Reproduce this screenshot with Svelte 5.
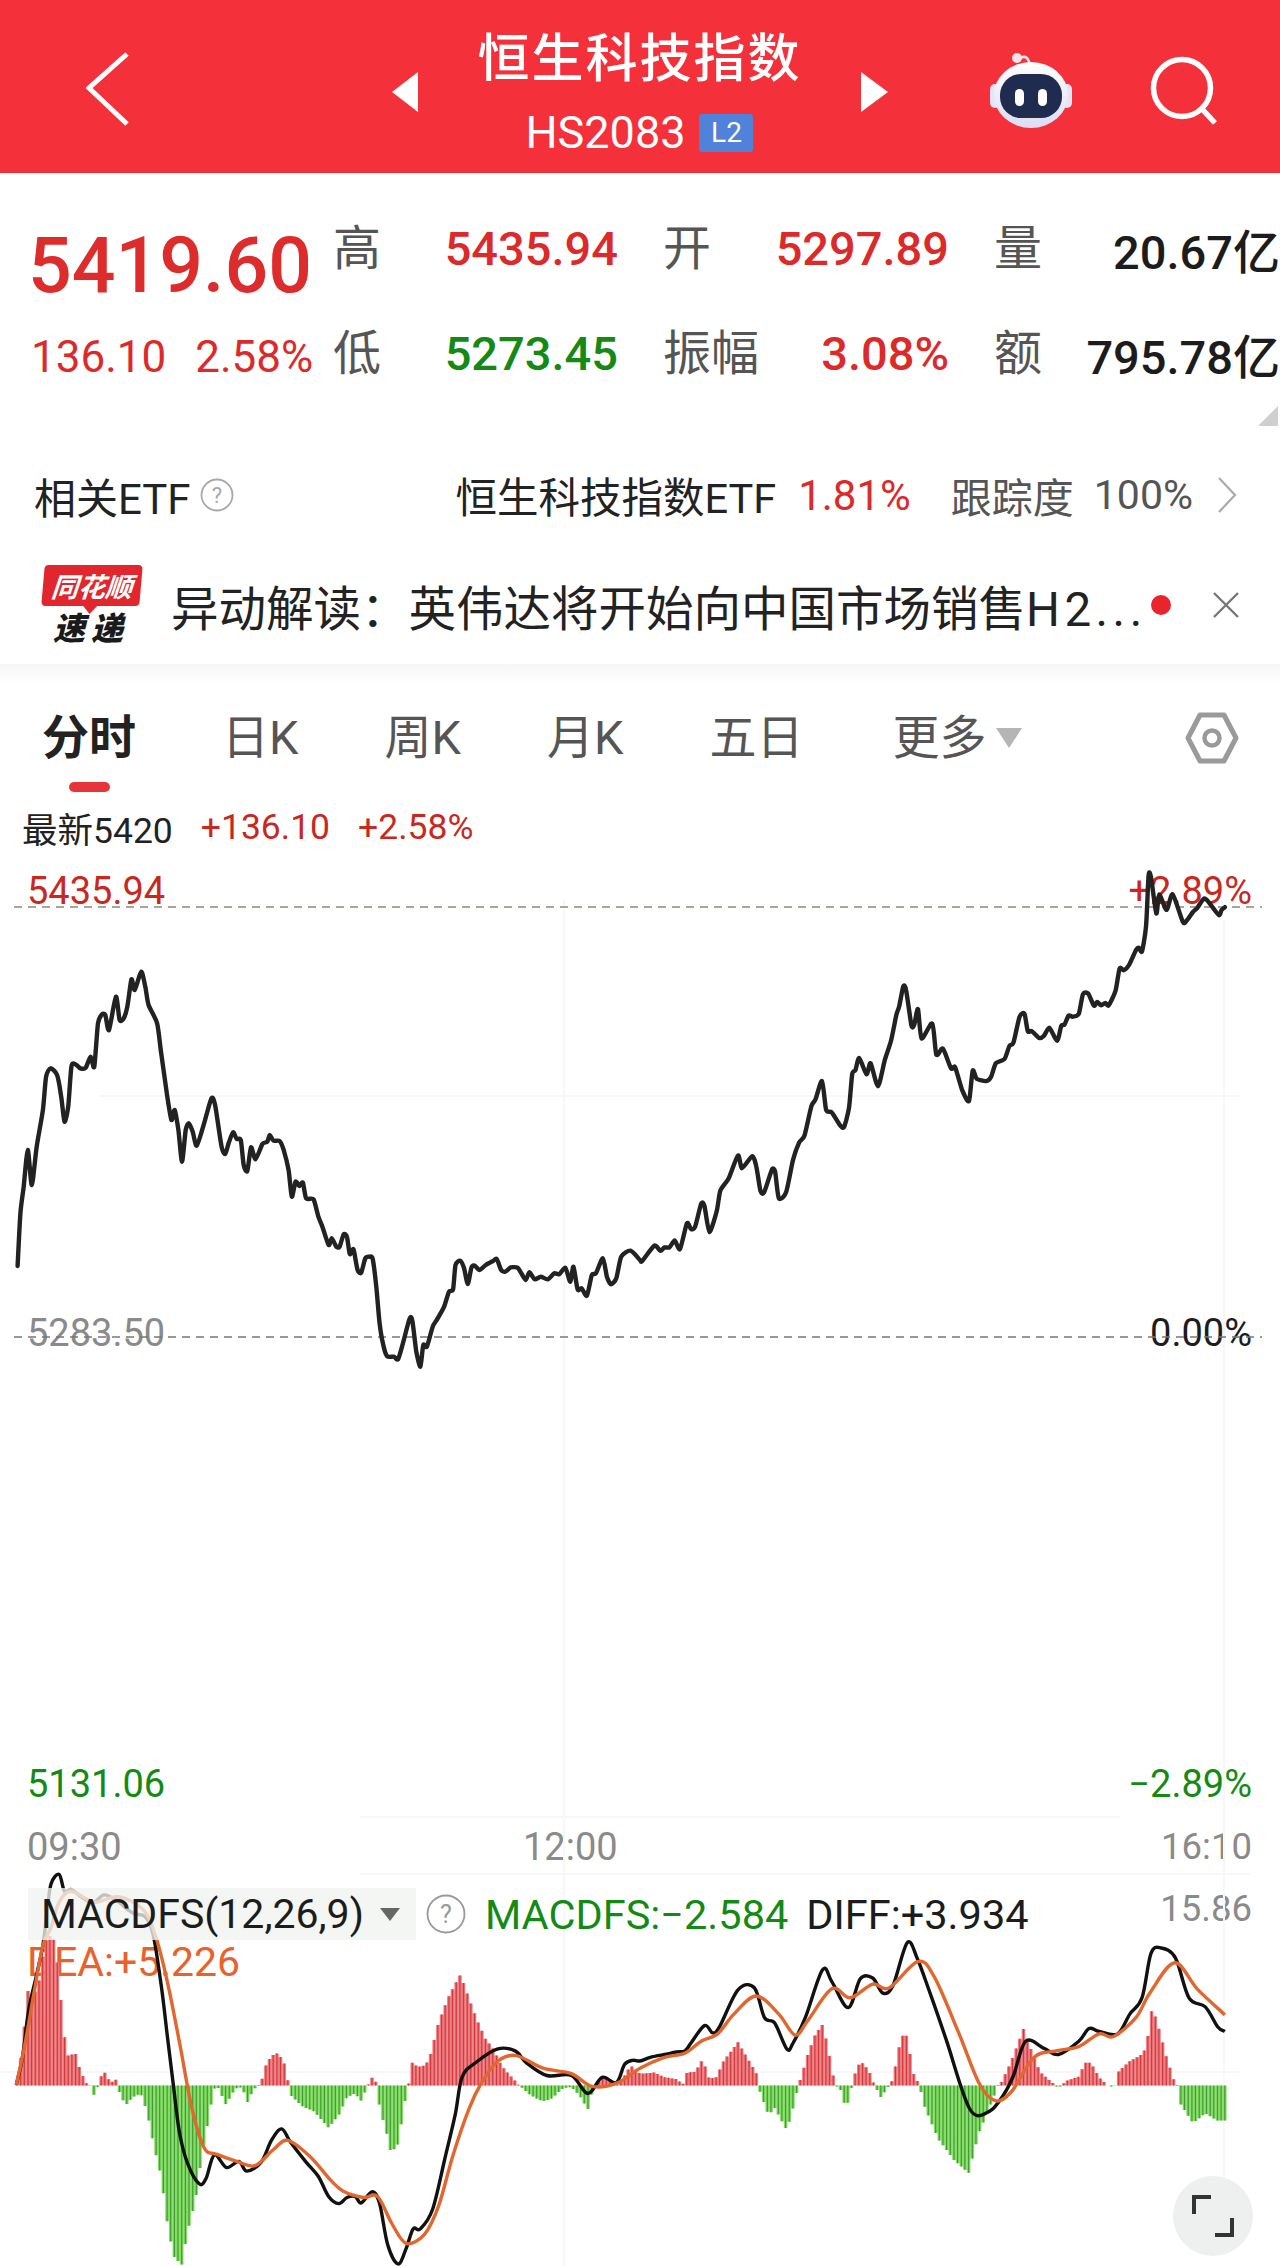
<script>
    // chart traces: "x,y" pairs read off the screen, converted to page pixels below
    const trace = (s, ox, oy, sy) =>
        s.trim().split(/\s+/).map((p) => {
            const [x, y] = p.split(",").map(Number);
            return [ox + x / 2.45, oy + y / sy];
        });

    // catmull-rom through the points so the lines don't look faceted
    const smooth = (pts, t = 0.7) => {
        let d = `M${pts[0][0].toFixed(1)} ${pts[0][1].toFixed(1)}`;
        for (let i = 0; i < pts.length - 1; i++) {
            const p0 = pts[i - 1] || pts[i];
            const p1 = pts[i];
            const p2 = pts[i + 1];
            const p3 = pts[i + 2] || p2;
            const c1x = p1[0] + ((p2[0] - p0[0]) / 6) * t;
            const c1y = p1[1] + ((p2[1] - p0[1]) / 6) * t;
            const c2x = p2[0] - ((p3[0] - p1[0]) / 6) * t;
            const c2y = p2[1] - ((p3[1] - p1[1]) / 6) * t;
            d += `C${c1x.toFixed(1)} ${c1y.toFixed(1)} ${c2x.toFixed(1)} ${c2y.toFixed(1)} ${p2[0].toFixed(1)} ${p2[1].toFixed(1)}`;
        }
        return d;
    };

    const priceLeft = trace(`43,1158 50,1000 58,920 68,810 78,915 90,800 105,690 113,590 124,565 140,585 150,650 158,725 167,680 175,560 185,553 197,565 210,563 222,530 231,560 240,430 250,403 258,405 267,450 284,350 293,420 303,415 312,380 322,298 330,330 346,275 356,320 364,375 385,430 395,520 410,650 420,720 428,690 437,750 446,845 455,750 463,730 472,755 482,797 500,730 518,655 527,675 543,800 552,822 560,790 571,757 580,777 590,780 597,855 606,873 615,802 626,838 643,792 655,785 661,765 670,782 685,783 695,810 707,870 715,950 724,905 733,918 742,908 750,955 768,958 780,1010 790,1040 805,1095 813,1075 824,1100 832,1100 842,1063 850,1070 857,1122 866,1108 876,1170 885,1178 895,1135 905,1130 913,1137 922,1220 930,1330 938,1390 948,1428 965,1430 975,1438 985,1400 1003,1318 1010,1320 1020,1415 1030,1460 1037,1395 1046,1400 1060,1340 1070,1320 1088,1280 1100,1235 1110,1228 1116,1155 1128,1142 1137,1165 1146,1212 1155,1163 1163,1157 1175,1170 1190,1155 1208,1143 1217,1137 1228,1170 1238,1175 1252,1162 1268,1163 1275,1175 1288,1200 1297,1177 1310,1198 1325,1190 1342,1198 1358,1180 1370,1183 1385,1163 1397,1205 1405,1160 1415,1228 1425,1225 1438,1247 1450,1185 1460,1180 1477,1135 1487,1190 1497,1213 1510,1195 1522,1130 1545,1112 1568,1140`, 0, 880, 3);
    const priceRight = trace(`5,1165 35,1120 50,1135 60,1125 72,1125 85,1105 98,1130 115,1055 125,1072 135,1065 150,998 158,1005 170,1080 188,1020 197,960 217,925 240,858 250,895 275,860 285,890 295,960 304,965 323,900 331,905 340,982 358,965 375,870 390,820 403,800 420,715 430,695 446,642 456,725 470,733 490,770 500,775 512,720 520,622 528,610 537,575 555,622 565,590 583,657 600,580 615,525 628,450 635,425 645,367 652,378 665,480 672,478 681,433 690,518 716,475 726,565 742,548 762,605 772,602 790,670 806,700 815,612 825,635 848,642 860,630 872,590 893,578 905,540 915,530 930,455 942,447 950,497 960,497 978,517 990,510 1003,487 1022,525 1032,482 1040,478 1050,452 1060,455 1075,447 1085,390 1098,388 1112,423 1120,412 1130,422 1140,415 1148,422 1165,380 1175,315 1185,320 1198,305 1215,262 1222,255 1230,265 1240,190 1246,45 1252,50 1265,155 1272,100 1290,145 1305,100 1330,180 1340,175 1355,150 1365,140 1382,112 1395,125 1418,160 1425,145 1433,137`, 640, 860, 2.904);
    const price = smooth([...priceLeft, ...priceRight]);

    const S = 2.77;
    const diff = smooth([
        ...trace(`40,1065 55,990 70,860 90,760 105,680 115,590 125,510 145,483 158,530 175,525 205,550 230,560 255,540 285,555 325,590 355,600 375,650 395,790 410,930 425,1070 440,1200 460,1285 488,1340 505,1325 525,1260 555,1295 585,1278 605,1305 640,1280 665,1220 690,1188 712,1225 750,1280 780,1320 805,1375 830,1395 850,1378 870,1375 885,1393 912,1362 930,1395 950,1510 975,1562 995,1520 1012,1465 1030,1465 1060,1410 1090,1270 1115,1150 1132,1045 1165,1005 1218,967 1262,972 1290,1005 1340,1040 1400,1040 1440,1090 1475,1045 1510,1060 1530,1010 1550,998`, 0, 1700, S),
        ...trace(`0,1000 25,990 60,982 90,975 110,972 125,950 158,902 178,922 195,905 240,803 280,797 305,880 330,895 360,967 375,950 405,880 447,748 470,780 510,852 540,772 570,770 595,812 620,790 655,672 680,718 710,810 750,940 808,1133 855,1140 890,1095 915,1040 945,945 990,965 1025,982 1075,945 1100,910 1125,918 1170,925 1200,870 1230,825 1252,702 1277,687 1312,715 1345,825 1385,850 1415,905 1433,918`, 640, 1700, S)
    ], 1);
    const dea = smooth([
        ...trace(`40,1065 60,960 85,800 105,680 125,630 145,560 175,530 230,560 290,545 350,580 380,650 410,780 440,950 470,1130 500,1240 530,1258 580,1278 625,1290 670,1245 705,1220 760,1265 810,1330 840,1360 890,1378 925,1375 960,1450 995,1505 1040,1480 1075,1400 1110,1260 1150,1130 1180,1060 1220,1000 1265,985 1330,1020 1400,1035 1450,1070 1510,1062`, 0, 1700, S),
        ...trace(`0,1020 60,990 110,978 150,945 190,925 230,870 285,820 340,870 380,928 410,890 470,800 515,825 570,787 610,798 680,725 720,765 780,920 830,1060 870,1110 910,1085 965,990 1020,972 1075,960 1125,925 1160,932 1215,880 1250,810 1310,728 1365,800 1433,872`, 640, 1700, S)
    ], 1);

    const hist = [
        ...trace(`40,1068 55,960 68,805 80,830 95,780 110,670 125,650 135,670 147,800 155,910 165,985 185,980 195,1020 210,1060 222,1068 232,1100 240,1068 250,1035 258,1032 270,1060 284,1052 290,1068 295,1100 310,1120 325,1100 345,1090 360,1140 380,1250 395,1320 410,1450 425,1540 445,1565 460,1470 480,1380 495,1255 508,1180 520,1100 528,1068 535,1075 545,1100 555,1125 565,1095 585,1068 600,1090 607,1115 620,1080 632,1068 640,1060 650,1015 665,985 680,978 695,1000 708,1068 712,1095 740,1125 770,1140 805,1185 830,1150 850,1100 870,1090 885,1110 898,1075 905,1060 912,1045 922,1060 926,1068 930,1130 945,1190 958,1255 975,1230 990,1130 997,1068 1003,1060 1010,1005 1022,1015 1035,1015 1050,1000 1060,960 1075,890 1100,820 1128,760 1150,830 1170,890 1190,940 1205,960 1230,1015 1250,1040 1272,1068 1280,1075 1300,1095 1330,1112 1350,1105 1380,1075 1400,1072 1420,1095 1440,1135 1450,1090 1460,1068 1475,1045 1490,1045 1505,1070 1520,1060 1545,1012`, 0, 1700, S),
        ...trace(`0,1035 35,1032 60,1045 90,1050 105,1065 115,1032 135,1030 155,992 165,1045 185,1048 205,1000 240,948 270,1005 288,1040 290,1068 295,1090 315,1150 330,1130 360,1192 375,1130 388,1068 395,1045 410,985 430,925 448,898 465,990 478,1068 490,1075 505,1135 518,1075 525,1040 540,1000 560,1025 575,1068 590,1100 608,1072 620,1050 640,930 655,930 668,1030 685,1068 695,1120 730,1215 770,1275 805,1310 830,1200 870,1090 875,1068 885,1060 910,1000 940,910 955,960 980,1030 1010,1060 1025,1075 1045,1055 1075,1043 1090,1005 1105,1005 1125,1045 1150,1072 1165,1068 1172,1030 1200,1000 1225,985 1240,965 1255,850 1270,905 1290,990 1310,1060 1318,1068 1325,1120 1355,1172 1385,1145 1415,1165 1437,1165`, 640, 1700, S)
    ];

    const zero = 2085.5;
    const histAt = (x) => {
        for (let i = 1; i < hist.length; i++) {
            const [x0, y0] = hist[i - 1];
            const [x1, y1] = hist[i];
            if (x <= x1) return y0 + ((y1 - y0) * (x - x0)) / (x1 - x0 || 1);
        }
        return hist[hist.length - 1][1];
    };

    let upFill = "", upLine = "", downFill = "", downLine = "";
    for (let x = 17; x <= 1226; x += 3.66) {
        const y = histAt(x);
        const h = (y - zero).toFixed(1);
        const bar = `M${(x - 1.8).toFixed(1)} ${zero}h3.6v${h}h-3.6z`;
        const line = `M${x.toFixed(1)} ${zero}v${h}`;
        if (y < zero) {
            upFill += bar;
            upLine += line;
        } else {
            downFill += bar;
            downLine += line;
        }
    }

    const tabs = ["日K", "周K", "月K", "五日"];
</script>

<main>
    <header class="topbar">
        <div class="left">
            <svg width="44" height="74" viewBox="0 0 44 74"><path d="M41 2 3 36l38 36" fill="none" stroke="#fff" stroke-width="5" /></svg>
        </div>
        <div class="center">
            <svg class="tri" width="26" height="40" viewBox="0 0 26 40"><path d="M26 0V40L0 20Z" fill="#fff" /></svg>
            <div class="titles">
                <h1>恒生科技指数</h1>
                <div class="code">HS2083<span class="badge">L2</span></div>
            </div>
            <svg class="tri" width="27" height="40" viewBox="0 0 27 40"><path d="M0 0V40L27 20Z" fill="#fff" /></svg>
        </div>
        <div class="right">
            <svg width="86" height="80" viewBox="0 0 86 80">
                <defs>
                    <linearGradient id="head" x1="0" y1="0" x2="0" y2="1">
                        <stop offset="0" stop-color="#ffffff" />
                        <stop offset="1" stop-color="#dcdcf4" />
                    </linearGradient>
                </defs>
                <path d="M32 6c6-3 9 0 10 9" fill="none" stroke="#f2e6ee" stroke-width="2.5" />
                <circle cx="29" cy="6" r="5" fill="#f6e4ea" />
                <rect x="2" y="32" width="10" height="24" rx="5" fill="#e4e4f6" />
                <rect x="74" y="32" width="10" height="24" rx="5" fill="#e4e4f6" />
                <ellipse cx="43" cy="43" rx="37" ry="33" fill="url(#head)" />
                <rect x="12" y="22" width="62" height="44" rx="21" fill="#202b50" />
                <rect x="27" y="37" width="9" height="17" rx="4.5" fill="#fff" />
                <rect x="50" y="37" width="9" height="17" rx="4.5" fill="#fff" />
            </svg>
            <svg width="70" height="72" viewBox="0 0 70 72">
                <circle cx="33" cy="32" r="28.5" fill="none" stroke="#fff" stroke-width="5.5" />
                <path d="M54 54 66 67" stroke="#fff" stroke-width="5.5" />
            </svg>
        </div>
    </header>

    <section class="stats">
        <div class="big">5419.60</div>
        <div class="group"><span class="lb">高</span><span class="val red">5435.94</span></div>
        <div class="group"><span class="lb">开</span><span class="val red">5297.89</span></div>
        <div class="group last"><span class="lb">量</span><span class="val dark">20.67亿</span></div>

        <div class="change red"><span>136.10</span><span>2.58%</span></div>
        <div class="group"><span class="lb">低</span><span class="val green">5273.45</span></div>
        <div class="group"><span class="lb">振幅</span><span class="val red">3.08%</span></div>
        <div class="group last"><span class="lb">额</span><span class="val dark">795.78亿</span></div>
        <i class="corner"></i>
    </section>

    <section class="etf">
        <span class="etf-title">相关ETF</span>
        <svg class="help" width="34" height="36" viewBox="0 0 34 36">
            <circle cx="17" cy="18" r="15.5" fill="none" stroke="#a8a8a8" stroke-width="1.8" />
            <text x="17" y="26" text-anchor="middle" font-size="22" fill="#a8a8a8">?</text>
        </svg>
        <span class="etf-name">恒生科技指数ETF</span>
        <span class="etf-pct">1.81%</span>
        <span class="etf-track">跟踪度</span>
        <span class="etf-track num">100%</span>
        <svg class="etf-arrow" width="20" height="36" viewBox="0 0 20 36"><path d="M2 1 18 18 2 35" fill="none" stroke="#aaa" stroke-width="2.2" /></svg>
    </section>

    <section class="news">
        <div class="logo">
            <div class="logo-top"><span>同花顺</span></div>
            <div class="logo-bottom">速递</div>
        </div>
        <div class="news-text">异动解读：英伟达将开始向中国市场销售<span>H2...</span></div>
        <i class="dot"></i>
        <svg class="close" width="26" height="26" viewBox="0 0 26 26"><path d="M1 1 25 25M25 1 1 25" stroke="#777" stroke-width="2.4" /></svg>
    </section>

    <div class="band"></div>

    <nav class="tabs">
        <div class="tab active">分时<i></i></div>
        {#each tabs as t}
            <div class="tab">{t}</div>
        {/each}
        <div class="tab more">更多<svg width="26" height="20" viewBox="0 0 26 20"><path d="M0 0H26L13 20Z" fill="#b5b5b5" /></svg></div>
        <svg class="gear" width="54" height="52" viewBox="0 0 54 52">
            <path d="M15 3H39L51 26 39 49H15L3 26Z" fill="none" stroke="#9a9a9a" stroke-width="5" stroke-linejoin="round" />
            <circle cx="27" cy="26" r="7.5" fill="none" stroke="#9a9a9a" stroke-width="4.5" />
        </svg>
    </nav>

    <div class="latest">
        <span>最新5420</span>
        <span class="up">+136.10</span>
        <span class="up">+2.58%</span>
    </div>

    <section class="chart">
        <span class="lab l-high up">5435.94</span>
        <span class="lab r-high up">+2.89%</span>
        <span class="lab l-mid gray">5283.50</span>
        <span class="lab r-mid dark">0.00%</span>
        <span class="lab l-low green">5131.06</span>
        <span class="lab r-low green">−2.89%</span>
        <span class="lab l-time gray">09:30</span>
        <span class="lab c-time gray">12:00</span>
        <span class="lab r-time gray">16:10</span>
        <span class="lab r-top gray">15.86</span>
        <span class="lab dea">DEA:+5.226</span>

        <svg class="plot" width="1280" height="1407" viewBox="0 859 1280 1407">
            <g stroke="#f7f7f7" stroke-width="2" fill="none">
                <path d="M564 900V2266M1224 920V2200" />
                <path d="M100 1096H1240M360 1817H1120M360 1874H1250M0 2072H1240" />
            </g>
            <g stroke-dasharray="8 6" stroke-width="1.6" fill="none">
                <path d="M14 907H1262" stroke="#8c8878" />
                <path d="M14 1337H1262" stroke="#777" />
            </g>
            <path d={price} fill="none" stroke="#222" stroke-width="4.4" stroke-linejoin="round" stroke-linecap="round" />
            <path d={upFill} fill="#ee7b80" />
            <path d={upLine} stroke="#cf3a3a" stroke-width="1.2" fill="none" />
            <path d={downFill} fill="#85dc66" />
            <path d={downLine} stroke="#3f9c30" stroke-width="1.2" fill="none" />
            <path d={diff} fill="none" stroke="#111" stroke-width="3.4" stroke-linejoin="round" />
            <path d={dea} fill="none" stroke="#e2672f" stroke-width="3.4" stroke-linejoin="round" />
        </svg>

        <div class="macd">
            <div class="macd-name">
                MACDFS(12,26,9)
                <svg width="20" height="13" viewBox="0 0 20 13"><path d="M0 0H20L10 13Z" fill="#666" /></svg>
            </div>
            <svg class="macd-help" width="40" height="40" viewBox="0 0 40 40">
                <circle cx="20" cy="20" r="18.5" fill="none" stroke="#999" stroke-width="1.8" />
                <text x="20" y="29" text-anchor="middle" font-size="25" fill="#999">?</text>
            </svg>
            <span class="macd-v green">MACDFS:−2.584</span>
            <span class="macd-d">DIFF:+3.934</span>
        </div>

        <button class="expand" aria-label="expand">
            <svg width="44" height="44" viewBox="0 0 44 44" fill="none" stroke="#333" stroke-width="4">
                <path d="M20 3H3V20" />
                <path d="M24 41H41V24" />
            </svg>
        </button>
    </section>
</main>

<style>
    :global(body) {
        margin: 0;
        background: #fff;
    }
    main {
        width: 1280px;
        height: 2266px;
        overflow: hidden;
        font-family: Roboto, "Noto Sans CJK SC", sans-serif;
        color: #222;
    }

    .topbar {
        height: 173px;
        background: #f4303b;
        border-bottom: 1px solid #e8323a;
        box-sizing: border-box;
        display: grid;
        grid-template-columns: 392px 496px 392px;
        align-items: center;
    }
    .left {
        padding-left: 86px;
        display: flex;
        padding-top: 6px;
    }
    .center {
        display: flex;
        justify-content: space-between;
        align-items: center;
        padding-top: 12px;
    }
    .titles {
        display: flex;
        flex-direction: column;
        align-items: center;
        margin-top: 1px;
    }
    h1 {
        margin: 0;
        font-size: 52px;
        line-height: 60px;
        font-weight: 500;
        letter-spacing: 2px;
        color: #fff;
    }
    .code {
        display: flex;
        align-items: center;
        gap: 14px;
        margin-top: 21px;
        font-size: 45px;
        line-height: 44px;
        color: #fff;
    }
    .badge {
        width: 54px;
        height: 38px;
        border-radius: 3px;
        background: #4f82d8;
        font-size: 28px;
        line-height: 38px;
        text-align: center;
    }
    .right {
        display: flex;
        align-items: center;
        padding-left: 100px;
        gap: 75px;
        padding-top: 12px;
    }

    .stats {
        position: relative;
        height: 267px;
        box-sizing: border-box;
        padding: 45px 0 0 31px;
        display: grid;
        grid-template-columns: 302px 330px 331px 286px;
        grid-template-rows: 60px 60px;
        row-gap: 45px;
    }
    .big {
        font-size: 77px;
        line-height: 80px;
        font-weight: 500;
        color: #dd2c2c;
        margin: 8px 0 0 -3px;
        white-space: nowrap;
    }
    .change {
        display: flex;
        gap: 29px;
        margin-top: 4px;
        font-size: 44px;
        line-height: 60px;
        white-space: nowrap;
    }
    .group {
        display: flex;
        justify-content: space-between;
        align-items: center;
        padding-right: 45px;
    }
    .group.last {
        padding-right: 0;
    }
    .lb {
        margin-bottom: 8px;
        font-size: 48px;
        color: #555;
    }
    .val {
        font-size: 47px;
        font-weight: 500;
        white-space: nowrap;
    }
    .red {
        color: #dc2a2a;
    }
    .green {
        color: #148a14;
    }
    .dark {
        color: #1c1c1c;
    }
    .corner {
        position: absolute;
        right: 2px;
        bottom: 14px;
        width: 0;
        height: 0;
        border-left: 20px solid transparent;
        border-bottom: 20px solid #cfcfcf;
    }

    .etf {
        height: 110px;
        box-sizing: border-box;
        padding: 0 43px 0 34px;
        display: flex;
        align-items: center;
        font-size: 41px;
    }
    .etf-title {
        font-size: 42px;
        white-space: nowrap;
    }
    .help {
        margin-left: 9px;
    }
    .etf-name {
        margin-left: auto;
        font-size: 41.5px;
        white-space: nowrap;
    }
    .etf-pct {
        margin-left: 22px;
        color: #dc2a2a;
        font-size: 42px;
    }
    .etf-track {
        margin-left: 40px;
        color: #555;
    }
    .etf-track.num {
        margin-left: 20px;
    }
    .etf-arrow {
        margin-left: 24px;
    }

    .news {
        height: 114px;
        box-sizing: border-box;
        padding: 0 41px 4px 43px;
        display: flex;
        align-items: center;
    }
    .logo {
        width: 98px;
        flex: none;
    }
    .logo-top {
        position: relative;
        height: 41px;
        background: #e2262d;
        border-radius: 4px;
        transform: skewX(-5deg);
        display: flex;
        align-items: center;
        justify-content: center;
    }
    .logo-top::after {
        content: "";
        position: absolute;
        left: 42px;
        bottom: -8px;
        border-left: 7px solid transparent;
        border-right: 7px solid transparent;
        border-top: 8px solid #e2262d;
    }
    .logo-top span {
        font-size: 27px;
        font-weight: 700;
        font-style: italic;
        color: #fff;
        white-space: nowrap;
    }
    .logo-bottom {
        margin: 7px 0 0 10px;
        font-size: 32px;
        line-height: 32px;
        font-weight: 900;
        font-style: italic;
        letter-spacing: 6px;
        color: #1a1a1a;
        white-space: nowrap;
    }
    .news-text {
        margin-left: 30px;
        width: 970px;
        flex: none;
        font-size: 47.5px;
        white-space: nowrap;
    }
    .news-text span {
        letter-spacing: 4.5px;
    }
    .dot {
        width: 20px;
        height: 20px;
        margin-left: 10px;
        border-radius: 50%;
        background: #e8242c;
        flex: none;
    }
    .close {
        margin-left: auto;
    }

    .band {
        height: 20px;
        background: linear-gradient(#f5f6f5, #fff);
    }

    .tabs {
        position: relative;
        height: 111px;
        box-sizing: border-box;
        padding: 24px 0 0 42px;
        display: flex;
        align-items: flex-start;
        gap: 86px;
    }
    .tab {
        font-size: 47px;
        line-height: 60px;
        color: #555;
        display: flex;
        flex-direction: column;
        align-items: center;
        white-space: nowrap;
    }
    .tab.active {
        font-weight: 700;
        color: #222;
    }
    .tab.active i {
        width: 41px;
        height: 10px;
        margin-top: 14px;
        border-radius: 5px;
        background: #e5353a;
    }
    .tab.more {
        flex-direction: row;
        gap: 9px;
        margin-left: 3px;
    }
    .gear {
        position: absolute;
        left: 1185px;
        top: 28px;
    }

    .latest {
        height: 64px;
        box-sizing: border-box;
        padding-left: 22px;
        display: flex;
        align-items: center;
        gap: 28px;
        font-size: 35.5px;
    }
    .up {
        color: #c9281f;
    }

    .chart {
        position: relative;
        height: 1407px;
    }
    .plot {
        position: absolute;
        left: 0;
        top: 0;
    }
    .lab {
        position: absolute;
        font-size: 38px;
        line-height: 36px;
        white-space: nowrap;
    }
    .gray {
        color: #8a8a8a;
    }
    .l-high, .l-mid, .l-low, .l-time, .dea {
        left: 27px;
    }
    .r-high, .r-mid, .r-low, .r-time, .r-top {
        right: 28px;
    }
    .l-high, .r-high { top: 14px; }
    .l-mid, .r-mid { top: 456px; }
    .l-low, .r-low { top: 907px; }
    .l-time, .c-time, .r-time { top: 970px; }
    .c-time { left: 523px; }
    .r-top { top: 1032px; }
    .r-time, .r-top {
        font-size: 36.5px;
    }
    .dea {
        top: 1083px;
        font-size: 41px;
        line-height: 40px;
        color: #e8622c;
    }

    .macd {
        position: absolute;
        left: 28px;
        top: 1029px;
        height: 52px;
        display: flex;
        align-items: center;
        font-size: 41.5px;
        white-space: nowrap;
    }
    .macd-name {
        width: 388px;
        height: 52px;
        box-sizing: border-box;
        padding: 0 16px 0 13px;
        display: flex;
        align-items: center;
        justify-content: space-between;
        background: rgba(240, 243, 240, 0.78);
        color: #1c1c1c;
        font-size: 41px;
    }
    .macd-help {
        margin-left: 10px;
    }
    .macd-v {
        margin-left: 19px;
    }
    .macd-d {
        margin-left: 18px;
        color: #1c1c1c;
    }

    .expand {
        position: absolute;
        left: 1173px;
        top: 1317px;
        width: 80px;
        height: 80px;
        padding: 0;
        border: none;
        border-radius: 50%;
        background: #eef0f0;
        display: flex;
        align-items: center;
        justify-content: center;
    }
</style>
